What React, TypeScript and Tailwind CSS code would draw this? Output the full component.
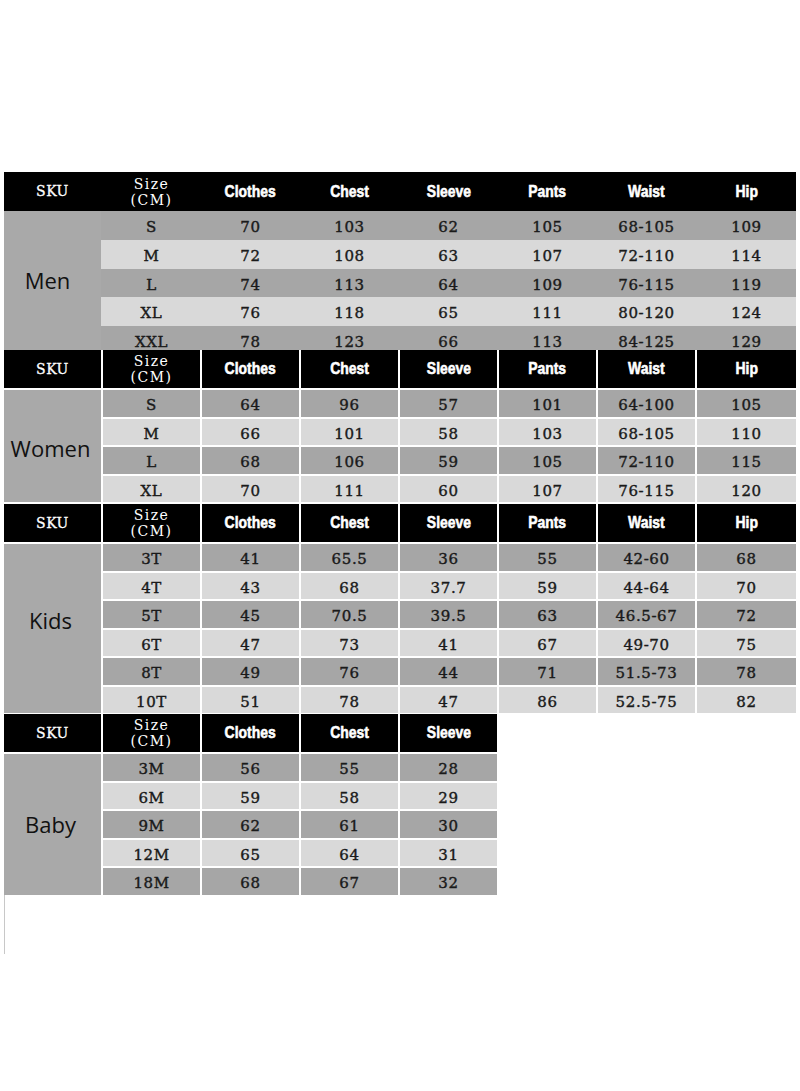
import React from "react";

const serif = "font-['DejaVu_Serif','Liberation_Serif',serif] font-normal";
const head = "font-['Liberation_Sans','Arial',sans-serif] font-bold [-webkit-text-stroke:0.6px_white]";
const label = "font-['Open_Sans','Noto_Sans',sans-serif]";

const allCols = ["Clothes", "Chest", "Sleeve", "Pants", "Waist", "Hip"];

type Section = {
	name: string;
	cols: string[];
	rows: string[][];
	heights: number[];
	joined?: boolean;
	labelShift?: string;
};

const sections: Section[] = [
	{
		name: "Men",
		cols: allCols,
		joined: true,
		labelShift: "pr-[10px]",
		heights: [29, 29, 28, 29, 24],
		rows: [
			["S", "70", "103", "62", "105", "68-105", "109"],
			["M", "72", "108", "63", "107", "72-110", "114"],
			["L", "74", "113", "64", "109", "76-115", "119"],
			["XL", "76", "118", "65", "111", "80-120", "124"],
			["XXL", "78", "123", "66", "113", "84-125", "129"],
		],
	},
	{
		name: "Women",
		cols: allCols,
		labelShift: "pr-[4px] pt-[4px]",
		heights: [27, 26, 27, 26],
		rows: [
			["S", "64", "96", "57", "101", "64-100", "105"],
			["M", "66", "101", "58", "103", "68-105", "110"],
			["L", "68", "106", "59", "105", "72-110", "115"],
			["XL", "70", "111", "60", "107", "76-115", "120"],
		],
	},
	{
		name: "Kids",
		cols: allCols,
		labelShift: "pb-[16px] pr-[4px]",
		heights: [27, 26, 27, 26, 27, 26],
		rows: [
			["3T", "41", "65.5", "36", "55", "42-60", "68"],
			["4T", "43", "68", "37.7", "59", "44-64", "70"],
			["5T", "45", "70.5", "39.5", "63", "46.5-67", "72"],
			["6T", "47", "73", "41", "67", "49-70", "75"],
			["8T", "49", "76", "44", "71", "51.5-73", "78"],
			["10T", "51", "78", "47", "86", "52.5-75", "82"],
		],
	},
	{
		name: "Baby",
		cols: ["Clothes", "Chest", "Sleeve"],
		labelShift: "pr-[4px]",
		heights: [27, 26, 27, 26, 27],
		rows: [
			["3M", "56", "55", "28"],
			["6M", "59", "58", "29"],
			["9M", "62", "61", "30"],
			["12M", "65", "64", "31"],
			["18M", "68", "67", "32"],
		],
	},
];

function SizeTable({ s }: { s: Section }) {
	const wide = s.cols.length === 6;
	const grid = wide
		? "grid grid-cols-[97px_97px_97px_97px_97px_97px_97px_99px] gap-x-[2px]"
		: "grid grid-cols-[97px_97px_97px_97px_97px] gap-x-[2px]";
	const rowGrid = wide
		? "grid grid-cols-[97px_97px_97px_97px_97px_97px_99px] gap-x-[2px]"
		: "grid grid-cols-[97px_97px_97px_97px_97px] gap-x-[2px]";

	return (
		<div className="flex flex-col">
			<div className={`${grid} ${s.joined ? "bg-black h-[39px]" : "bg-white h-[38px]"} w-fit`}>
				<div className={`bg-black text-white flex items-center justify-center text-[14px] tracking-[0.5px] [-webkit-text-stroke:0.3px_white] ${serif}`}>
					SKU
				</div>
				<div className={`bg-black text-white flex flex-col items-center justify-center text-[14px] leading-[16px] tracking-[1.5px] ${serif}`}>
					<span>Size</span>
					<span>(CM)</span>
				</div>
				{s.cols.map((c) => (
					<div key={c} className={`bg-black text-white flex items-center justify-center text-[17px] ${head}`}>
						<span className="inline-block scale-x-[0.82]">{c}</span>
					</div>
				))}
			</div>

			<div className={`flex w-fit ${s.joined ? "" : "gap-x-[2px] mt-[2px]"}`}>
				<div className={`w-[97px] bg-[#a9a9a9] flex items-center justify-center text-[22px] text-[#111] ${label} ${s.labelShift ?? ""}`}>
					{s.name}
				</div>
				<div className={`flex flex-col ${s.joined ? "" : "gap-y-[2px]"}`}>
					{s.rows.map((r, i) => {
						const dark = i % 2 === 0;
						const bg = dark ? "bg-[#a6a6a6]" : "bg-[#d9d9d9]";
						const last = s.joined && i === s.rows.length - 1;
						return (
							<div
								key={i}
								className={`${rowGrid} ${s.joined ? `${bg} pl-[2px]` : ""}`}
								style={{ height: s.heights[i] }}>
								{r.map((v, j) => (
									<div
										key={j}
										className={`${bg} flex justify-center text-[15px] leading-[18px] tracking-[0.6px] text-[#1a1a1a] [-webkit-text-stroke:0.4px_#1a1a1a] ${serif} ${last ? "items-start pt-[7px] overflow-hidden" : "items-center pt-[3px]"}`}>
										{v}
									</div>
								))}
							</div>
						);
					})}
				</div>
			</div>
		</div>
	);
}

export default function App() {
	return (
		<div className="w-[800px] h-[1091px] bg-white pt-[172px] pl-[4px] overflow-hidden">
			<div className="flex flex-col">
				<SizeTable s={sections[0]} />
				<SizeTable s={sections[1]} />
				<div className="h-[2px]" />
				<SizeTable s={sections[2]} />
				<div className="h-[1px]" />
				<SizeTable s={sections[3]} />
				<div className="w-[1px] h-[59px] bg-[#c8c8c8]" />
			</div>
		</div>
	);
}
